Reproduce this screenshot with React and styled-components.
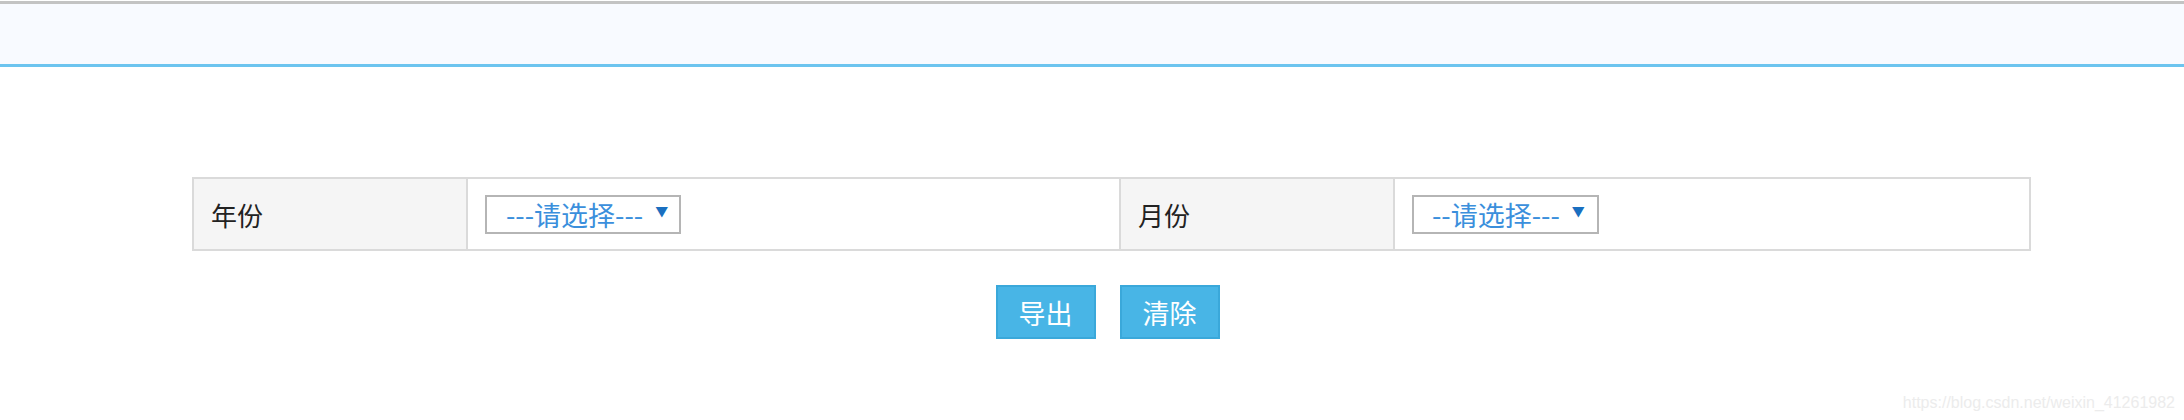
import React from 'react';
import styled, { createGlobalStyle } from 'styled-components';

const GlobalStyle = createGlobalStyle`
  html, body {
    margin: 0;
    padding: 0;
    background: #fff;
    font-family: "Liberation Sans", "Noto Sans CJK SC", sans-serif;
  }
`;

const Page = styled.div`
  width: 2184px;
  height: 420px;
  position: relative;
  overflow: hidden;
  padding-top: 1px;
  box-sizing: border-box;
`;

const TopBar = styled.div`
  height: 60px;
  background: #f8faff;
  border-top: 3px solid #c3c3c3;
  border-bottom: 3px solid #6cc4ef;
`;

const Content = styled.div`
  padding: 110px 155px 0 192px;
`;

const FormTable = styled.table`
  width: 1837px;
  border-collapse: collapse;
  border: 2px solid #dadada;
  table-layout: fixed;

  td {
    border: 2px solid #dadada;
    height: 72px;
    padding: 0;
    vertical-align: middle;
  }
`;

const LabelCell = styled.td`
  width: ${(p) => p.$width}px;
  background: #f5f5f5;
  padding-left: 17px !important;
  box-sizing: border-box;
  font-size: 26px;
  color: #222;
  font-family: "Noto Sans CJK SC", sans-serif;
`;

const FieldCell = styled.td`
  width: ${(p) => p.$width}px;
  padding-left: 17px !important;
  box-sizing: border-box;
`;

const Select = styled.div`
  display: inline-flex;
  align-items: center;
  width: ${(p) => p.$width}px;
  height: 39px;
  box-sizing: border-box;
  border: 2px solid #b5b5b5;
  padding-left: ${(p) => p.$pad}px;
  font-family: "Noto Sans CJK SC", sans-serif;
  font-size: 27px;
  color: #3b8fdc;
  line-height: 1;
`;

const Arrow = styled.span`
  font-size: 13px;
  color: #1a6fc0;
  margin-left: 12px;
  margin-top: -8px;
`;

const Actions = styled.div`
  display: flex;
  justify-content: center;
  gap: 24px;
  margin-top: 34px;
  padding-right: 6px;
`;

const Button = styled.button`
  width: 100px;
  height: 54px;
  background: #48b5e6;
  border: 2px solid #3aa8da;
  color: #fff;
  font-size: 27px;
  font-family: "Noto Sans CJK SC", sans-serif;
  padding: 0;
  cursor: pointer;
`;

const Watermark = styled.div`
  position: absolute;
  right: 9px;
  bottom: 8px;
  font-size: 16px;
  color: #ececec;
  font-family: "Liberation Sans", sans-serif;
`;

export default function App() {
  return (
    <>
      <GlobalStyle />
      <Page>
        <TopBar />
        <Content>
          <FormTable>
            <tbody>
              <tr>
                <LabelCell $width={274}>年份</LabelCell>
                <FieldCell $width={653}>
                  <Select $width={196} $pad={19}>
                    ---请选择---<Arrow>▼</Arrow>
                  </Select>
                </FieldCell>
                <LabelCell $width={274}>月份</LabelCell>
                <FieldCell $width={636}>
                  <Select $width={187} $pad={18}>
                    --请选择---<Arrow>▼</Arrow>
                  </Select>
                </FieldCell>
              </tr>
            </tbody>
          </FormTable>
          <Actions>
            <Button>导出</Button>
            <Button>清除</Button>
          </Actions>
        </Content>
        <Watermark>https://blog.csdn.net/weixin_41261982</Watermark>
      </Page>
    </>
  );
}
